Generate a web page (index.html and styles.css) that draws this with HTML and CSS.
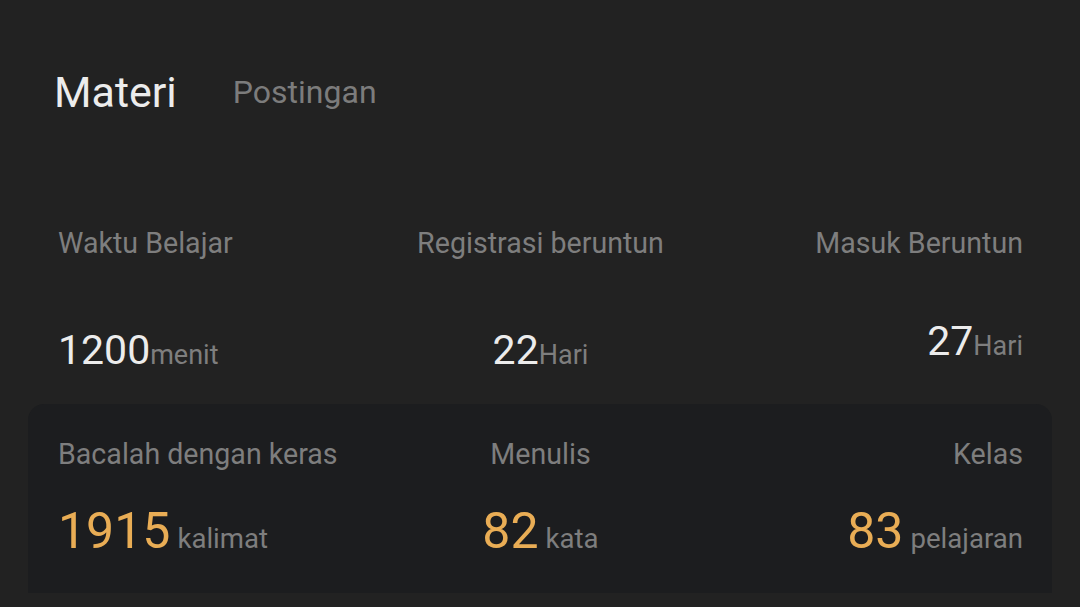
FILE: index.html
```html
<!DOCTYPE html>
<html lang="id">
<head>
  <meta charset="UTF-8" />
  <meta name="viewport" content="width=device-width, initial-scale=1.0"/>
  <title>Materi</title>
  <link rel="stylesheet" href="styles.css">
</head>
<body>

<nav class="tabs">
  <span class="tab active">Materi</span>
  <span class="tab">Postingan</span>
</nav>

<section class="stats">
  <div class="stat left">
    <div class="label">Waktu Belajar</div>
    <div class="value">1200<span class="unit">menit</span></div>
  </div>
  <div class="stat center">
    <div class="label">Registrasi beruntun</div>
    <div class="value">22<span class="unit">Hari</span></div>
  </div>
  <div class="stat right">
    <div class="label">Masuk Beruntun</div>
    <div class="value raised">27<span class="unit">Hari</span></div>
  </div>
</section>

<section class="stats card">
  <div class="stat left">
    <div class="label">Bacalah dengan keras</div>
    <div class="value big">1915<span class="unit">kalimat</span></div>
  </div>
  <div class="stat center">
    <div class="label">Menulis</div>
    <div class="value big">82<span class="unit">kata</span></div>
  </div>
  <div class="stat right">
    <div class="label">Kelas</div>
    <div class="value big">83<span class="unit">pelajaran</span></div>
  </div>
</section>

</body>
</html>
```

FILE: styles.css
```css
body { margin: 0; font-family: Roboto, "Noto Sans", sans-serif; background: #222222; color: #e8e8e8; height: 607px; overflow: hidden; }

.tabs { display: flex; align-items: center; gap: 56px; padding: 67px 54px 0; }
.tab { font-size: 32px; line-height: 50px; color: #7c7c7c; }
.tab.active { font-size: 43px; color: #ececec; }

.stats { display: grid; grid-template-columns: 1fr 1fr 1fr; margin: 109px 57px 0 58px; }
.stat.left { text-align: left; }
.stat.center { text-align: center; }
.stat.right { text-align: right; }

.label { font-size: 28.6px; line-height: 34px; color: #7e7e7e; }
.value { font-size: 41px; line-height: 48px; margin-top: 66px; color: #ececec; }
.value.raised { margin-top: 57px; }
.unit { font-size: 27px; color: #7e7e7e; }

.card {
  box-sizing: border-box; height: 189px;
  margin: 25px 28px 0; padding: 33px 29px 0 30px;
  background: #1c1d1f; border-radius: 16px 16px 0 0;
}
.value.big { font-size: 50px; line-height: 58px; margin-top: 31px; color: #e9ad55; }
.value.big .unit { font-size: 27.6px; margin-left: 7px; }
```
